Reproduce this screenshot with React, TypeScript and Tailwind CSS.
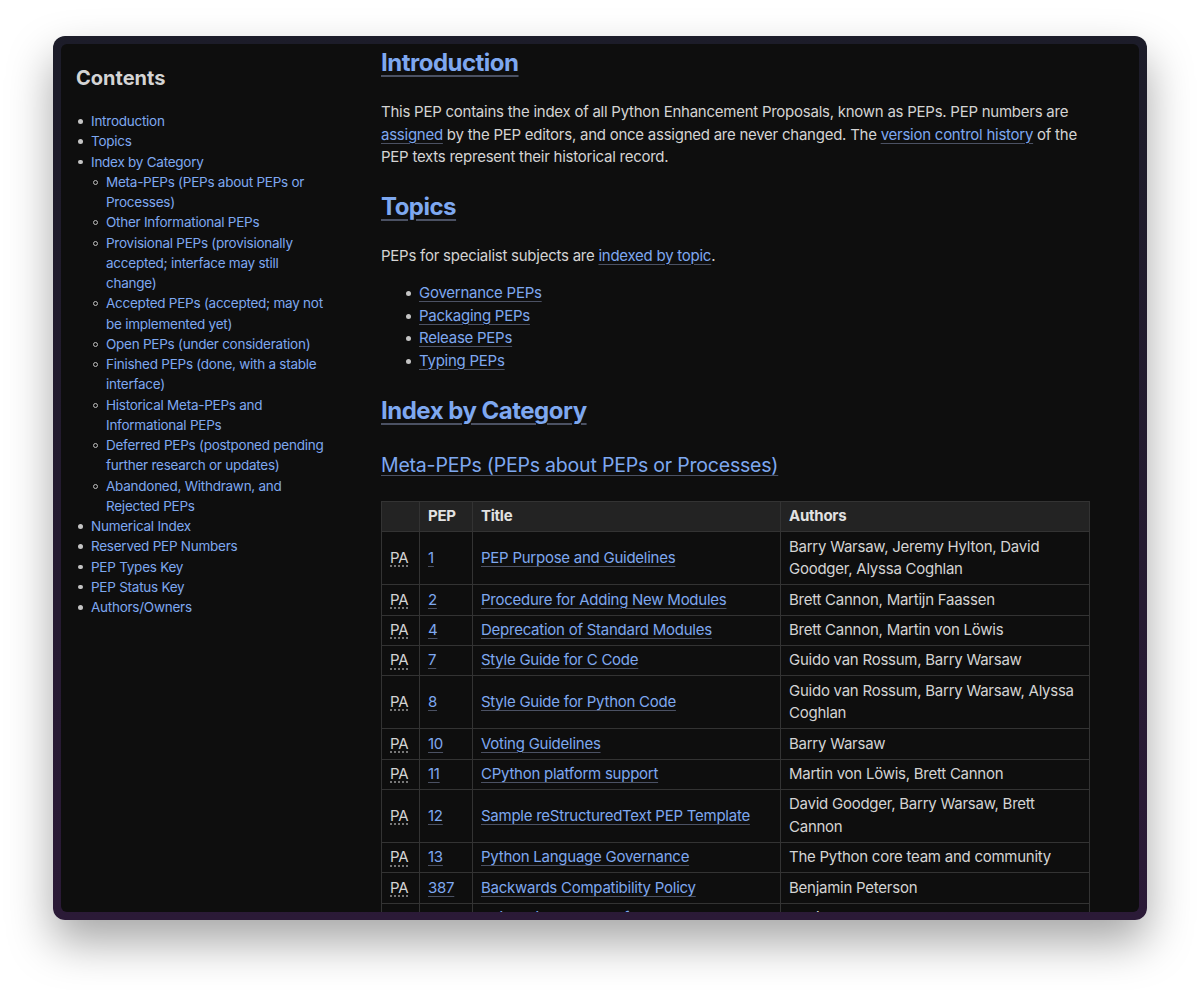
import React from "react";

const F = { fontFamily: "Inter, 'Noto Sans', 'Liberation Sans', sans-serif" };

const sidebar: { t: string; sub?: string[] }[] = [
  { t: "Introduction" },
  { t: "Topics" },
  {
    t: "Index by Category",
    sub: [
      "Meta-PEPs (PEPs about PEPs or Processes)",
      "Other Informational PEPs",
      "Provisional PEPs (provisionally accepted; interface may still change)",
      "Accepted PEPs (accepted; may not be implemented yet)",
      "Open PEPs (under consideration)",
      "Finished PEPs (done, with a stable interface)",
      "Historical Meta-PEPs and Informational PEPs",
      "Deferred PEPs (postponed pending further research or updates)",
      "Abandoned, Withdrawn, and Rejected PEPs",
    ],
  },
  { t: "Numerical Index" },
  { t: "Reserved PEP Numbers" },
  { t: "PEP Types Key" },
  { t: "PEP Status Key" },
  { t: "Authors/Owners" },
];

const rows = [
  ["1", "PEP Purpose and Guidelines", "Barry Warsaw, Jeremy Hylton, David Goodger, Alyssa Coghlan"],
  ["2", "Procedure for Adding New Modules", "Brett Cannon, Martijn Faassen"],
  ["4", "Deprecation of Standard Modules", "Brett Cannon, Martin von Löwis"],
  ["7", "Style Guide for C Code", "Guido van Rossum, Barry Warsaw"],
  ["8", "Style Guide for Python Code", "Guido van Rossum, Barry Warsaw, Alyssa Coghlan"],
  ["10", "Voting Guidelines", "Barry Warsaw"],
  ["11", "CPython platform support", "Martin von Löwis, Brett Cannon"],
  ["12", "Sample reStructuredText PEP Template", "David Goodger, Barry Warsaw, Brett Cannon"],
  ["13", "Python Language Governance", "The Python core team and community"],
  ["387", "Backwards Compatibility Policy", "Benjamin Peterson"],
  ["581", "Using GitHub Issues for CPython", "Mariatta"],
];

const link =
  "text-[#7ea8f0] underline decoration-[#4b5163] decoration-1 underline-offset-[3px]";
const h2 =
  "text-[#7ea8f0] underline decoration-[#4b5163] decoration-2 underline-offset-[4px]";
const cell = "border border-[#333] px-2 py-[3.45px]";

export default function App() {
  return (
    <div className="w-[1200px] h-[990px] bg-white pt-[36px] pl-[53px]" style={F}>
      <div className="w-[1094px] h-[884px] rounded-[12px] p-[8px] bg-gradient-to-b from-[#1c1c29] to-[#2b1a37] shadow-[0_22px_45px_rgba(0,0,0,0.35)]">
        <div className="h-full rounded-[6px] bg-[#0e0e0e] overflow-hidden flex">
          <aside className="w-[320px] shrink-0 pl-[15px] pr-[53px] pt-[20px]">
            <h2 className="text-[20px] leading-[28px] font-bold text-[#d4d4d4]">Contents</h2>
            <ul className="mt-[19px] text-[13.5px] leading-[20.25px] tracking-[-0.25px]">
              {sidebar.map((s) => (
                <li key={s.t} className="flex">
                  <span className="w-[15px] shrink-0 flex pt-[8px] pl-[2px]">
                    <span className="block w-[4.5px] h-[4.5px] rounded-full bg-[#c4c4c4]" />
                  </span>
                  <div className="flex-1">
                    <span className="text-[#7ea8f0]">{s.t}</span>
                    {s.sub && (
                      <ul>
                        {s.sub.map((x) => (
                          <li key={x} className="flex">
                            <span className="w-[15px] shrink-0 flex pt-[8px] pl-[2px]">
                              <span className="block w-[5px] h-[5px] rounded-full border border-[#bdbdbd]" />
                            </span>
                            <span className="text-[#7ea8f0] flex-1">{x}</span>
                          </li>
                        ))}
                      </ul>
                    )}
                  </div>
                </li>
              ))}
            </ul>
          </aside>
          <main className="w-[708px] shrink-0 text-[15px] leading-[22.5px] tracking-[-0.25px] text-[#d4d4d4]">
            <h2 className="mt-[3px] text-[24px] leading-[32px] font-bold tracking-[-0.5px]">
              <span className={h2}>Introduction</span>
            </h2>
            <p className="mt-[22px]">
              This PEP contains the index of all Python Enhancement Proposals, known as PEPs. PEP numbers are{" "}
              <span className={link}>assigned</span> by the PEP editors, and once assigned are never changed. The{" "}
              <span className={link}>version control history</span> of the PEP texts represent their historical record.
            </p>
            <h2 className="mt-[22px] text-[24px] leading-[32px] font-bold tracking-[-0.5px]">
              <span className={h2}>Topics</span>
            </h2>
            <p className="mt-[22px]">
              PEPs for specialist subjects are <span className={link}>indexed by topic</span>.
            </p>
            <ul className="mt-[15px] pl-[25px]">
              {["Governance PEPs", "Packaging PEPs", "Release PEPs", "Typing PEPs"].map((t) => (
                <li key={t} className="flex">
                  <span className="w-[13px] shrink-0 flex pt-[9px]">
                    <span className="block w-[5px] h-[5px] rounded-full bg-[#c4c4c4]" />
                  </span>
                  <span className={link}>{t}</span>
                </li>
              ))}
            </ul>
            <h2 className="mt-[23px] text-[24px] leading-[32px] font-bold tracking-[-0.5px]">
              <span className={h2}>Index by Category</span>
            </h2>
            <h3 className="mt-[24px] text-[19.5px] leading-[28px] tracking-[-0.2px]">
              <span className={link}>Meta-PEPs (PEPs about PEPs or Processes)</span>
            </h3>
            <table className="mt-[22px] w-[708px] border-collapse table-fixed">
              <colgroup>
                <col className="w-[38px]" />
                <col className="w-[53px]" />
                <col className="w-[308px]" />
                <col className="w-[309px]" />
              </colgroup>
              <thead>
                <tr className="bg-[#232323] font-bold text-[#e2e2e2]">
                  <th className={`${cell} text-left`}></th>
                  <th className={`${cell} text-left`}>PEP</th>
                  <th className={`${cell} text-left`}>Title</th>
                  <th className={`${cell} text-left`}>Authors</th>
                </tr>
              </thead>
              <tbody>
                {rows.map(([n, t, a]) => (
                  <tr key={n}>
                    <td className={cell}>
                      <span className="underline decoration-dotted decoration-[#9a9a9a] underline-offset-[3px]">PA</span>
                    </td>
                    <td className={cell}>
                      <span className={link}>{n}</span>
                    </td>
                    <td className={cell}>
                      <span className={link}>{t}</span>
                    </td>
                    <td className={cell}>{a}</td>
                  </tr>
                ))}
              </tbody>
            </table>
          </main>
        </div>
      </div>
    </div>
  );
}
